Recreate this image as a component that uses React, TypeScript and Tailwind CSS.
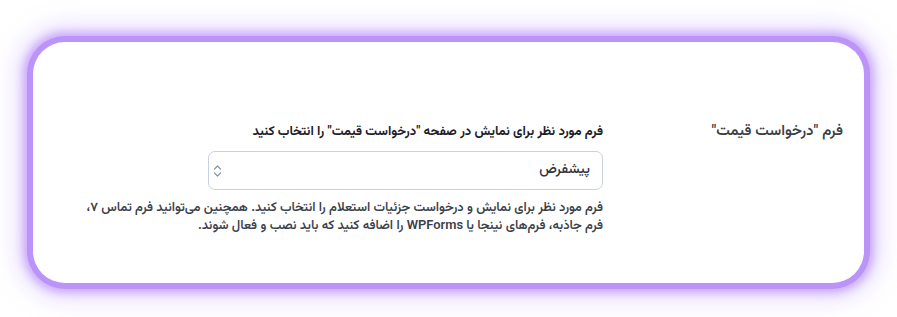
import React from "react";

export default function App() {
  return (
    <div className="w-[897px] h-[317px] bg-white pt-[42px] px-[33px] overflow-hidden">
      <div
        dir="rtl"
        className="h-[241px] rounded-[32px] bg-white flex items-start pr-[21px] pt-[82px] shadow-[0_0_0_6px_#bb93f9,0_0_8px_10px_rgba(190,150,250,0.75),0_0_24px_16px_rgba(205,180,252,0.45)]"
        style={{ fontFamily: '"Vazirmatn", "Noto Sans Arabic", "DejaVu Sans", sans-serif' }}
      >
        <div className="w-[240px] shrink-0 text-[15px] font-semibold text-[#3a3f47] leading-[20px] -mt-[2px]">
          فرم "درخواست قیمت"
        </div>
        <div className="w-[540px] shrink-0">
          <div className="text-[13px] font-bold text-[#1d2127] leading-[16px] whitespace-nowrap">
            فرم مورد نظر برای نمایش در صفحه "درخواست قیمت" را انتخاب کنید
          </div>
          <div className="mt-[11px] w-[395px] h-[39px] rounded-[7px] border border-[#c9d1e1] flex items-center justify-between pr-[12px] pl-[4px]">
            <span className="text-[14px] font-medium text-[#2f333a]">پیشفرض</span>
            <svg width="9" height="14" viewBox="0 0 9 14" fill="none" stroke="#8a93a3" strokeWidth="1.2" strokeLinecap="round" strokeLinejoin="round">
              <path d="M1.5 5 L4.5 2 L7.5 5" />
              <path d="M1.5 9 L4.5 12 L7.5 9" />
            </svg>
          </div>
          <p className="mt-[9px] text-[12.9px] font-semibold text-[#3b414b] leading-[18px] whitespace-nowrap">
            فرم مورد نظر برای نمایش و درخواست جزئیات استعلام را انتخاب کنید. همچنین می‌توانید فرم تماس ۷،
            <br />
            فرم جاذبه، فرم‌های نینجا یا WPForms را اضافه کنید که باید نصب و فعال شوند.
          </p>
        </div>
      </div>
    </div>
  );
}
